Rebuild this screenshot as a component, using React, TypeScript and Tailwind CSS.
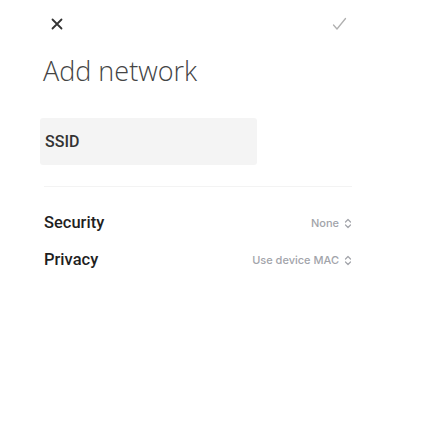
import React from 'react';

const Chevrons = () => (
    <svg width="8" height="11" viewBox="0 0 8 11" fill="none" stroke="currentColor" strokeWidth="1.2" strokeLinecap="round" strokeLinejoin="round">
        <path d="M1.5 4 L4 1.5 L6.5 4" />
        <path d="M1.5 7 L4 9.5 L6.5 7" />
    </svg>
);

const Row = ({ label, value }: { label: string; value: string }) => (
    <div className="flex items-center justify-between h-[37px] pl-[4px]">
        <span className="text-[16.5px] font-medium text-[#1f1f1f]" style={{ fontFamily: 'Roboto, sans-serif' }}>{label}</span>
        <span className="flex items-center gap-[5px] text-[11px] font-medium text-[#a2a4aa]" style={{ fontFamily: 'Inter, sans-serif' }}>
            {value}
            <Chevrons />
        </span>
    </div>
);

export default function App() {
    return (
        <div className="w-[424px] h-[448px] bg-white pl-[40px] pr-[72px] pt-[17px]">
            {/* Header */}
            <div className="flex items-center justify-between h-[14px]">
                <svg className="ml-[11px]" width="12" height="12" viewBox="0 0 12 12" stroke="#333" strokeWidth="1.8" strokeLinecap="round">
                    <path d="M1.5 1.5 L10.5 10.5 M10.5 1.5 L1.5 10.5" />
                </svg>
                <svg className="mr-[5px]" width="15" height="14" viewBox="0 0 15 14" fill="none" stroke="#b0b0b0" strokeWidth="1.3" strokeLinecap="round" strokeLinejoin="round">
                    <path d="M1.5 8 L5 12 L13.5 1.5" />
                </svg>
            </div>

            <h1 className="mt-[22px] ml-[3px] text-[27px] leading-[36px] font-light text-[#444]" style={{ fontFamily: '"Open Sans", sans-serif' }}>
                Add network
            </h1>

            {/* SSID */}
            <div className="mt-[29px] w-[217px] h-[47px] bg-[#f4f4f4] rounded-[3px] flex items-center pl-[5px]">
                <span className="text-[16px] font-medium text-[#333]" style={{ fontFamily: 'Roboto, sans-serif' }}>SSID</span>
            </div>

            <div className="mt-[21px] ml-[4px] h-px bg-[#f3f3f3]" />

            <div className="mt-[18px]">
                <Row label="Security" value="None" />
                <Row label="Privacy" value="Use device MAC" />
            </div>
        </div>
    );
}
